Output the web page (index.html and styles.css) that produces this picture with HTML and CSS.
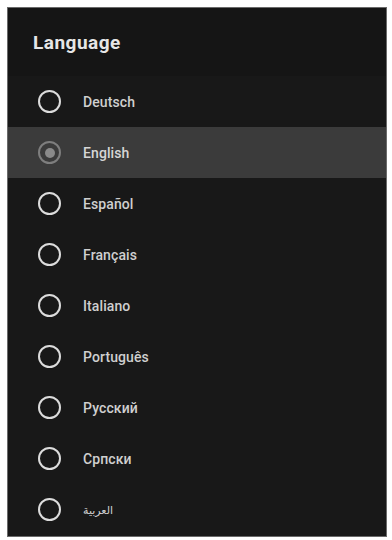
FILE: index.html
```html
<!DOCTYPE html>
<html>
<head>
<meta charset="utf-8">
<link rel="stylesheet" href="styles.css">
</head>
<body>
<div class="panel">
  <div class="header"><h1 class="title">Language</h1></div>
  <ul class="list">
    <li class="row"><span class="radio"></span><span class="label">Deutsch</span></li>
    <li class="row selected"><span class="radio"><span class="dot"></span></span><span class="label">English</span></li>
    <li class="row"><span class="radio"></span><span class="label">Español</span></li>
    <li class="row"><span class="radio"></span><span class="label">Français</span></li>
    <li class="row"><span class="radio"></span><span class="label">Italiano</span></li>
    <li class="row"><span class="radio"></span><span class="label">Português</span></li>
    <li class="row"><span class="radio"></span><span class="label">Русский</span></li>
    <li class="row"><span class="radio"></span><span class="label">Српски</span></li>
    <li class="row"><span class="radio"></span><span class="label arabic">العربية</span></li>
  </ul>
</div>
</body>
</html>
```

FILE: styles.css
```css
html, body {
  margin: 0;
  padding: 0;
  background: #ffffff;
}
body {
  padding: 7px 5px 3px 7px;
  font-family: Roboto, "Noto Sans", sans-serif;
}
.panel {
  background: #181818;
  border: 1px solid #6a6a6a;
  height: 530px;
  box-sizing: border-box;
  display: flex;
  flex-direction: column;
}
.header {
  height: 68px;
  display: flex;
  align-items: center;
  padding-left: 25px;
  background: #151515;
}
.title {
  margin: 0;
  font-size: 19px;
  font-weight: 700;
  color: #e6e6e6;
  letter-spacing: 0.5px;
}
.list {
  list-style: none;
  margin: 0;
  padding: 0;
}
.row {
  height: 51px;
  display: flex;
  align-items: center;
  padding-left: 30px;
}
.row.selected {
  background: #3b3b3b;
}
.radio {
  width: 23px;
  height: 23px;
  box-sizing: border-box;
  border: 2.5px solid #dcdcdc;
  border-radius: 50%;
  display: flex;
  align-items: center;
  justify-content: center;
  flex: none;
}
.selected .radio {
  border-color: #7e7e7e;
}
.dot {
  width: 10px;
  height: 10px;
  border-radius: 50%;
  background: #8a8a8a;
}
.label {
  margin-left: 22px;
  font-size: 14px;
  font-weight: 500;
  color: #cfcfcf;
  letter-spacing: 0.1px;
}
.selected .label {
  color: #d6d6d6;
}
.arabic {
  font-family: "Noto Sans", "DejaVu Sans", sans-serif;
  font-size: 11px;
}
```
